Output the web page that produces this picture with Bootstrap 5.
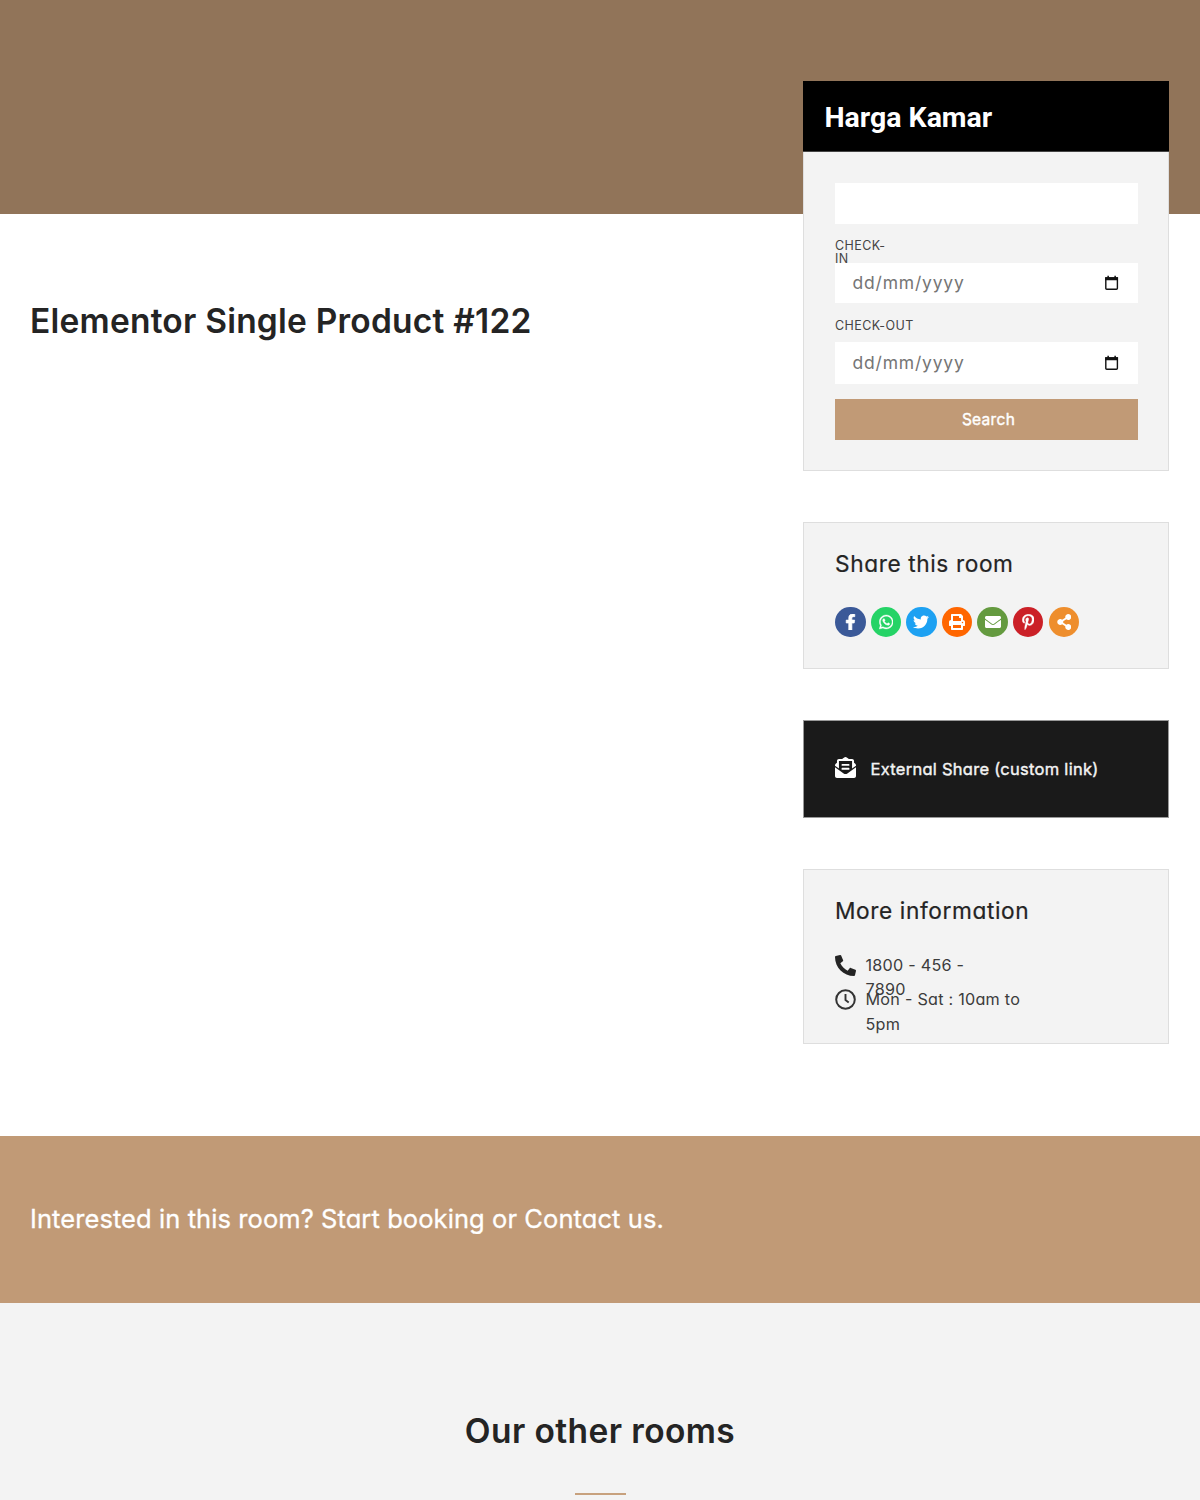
<!DOCTYPE html>
<html lang="en">
<head>
<meta charset="utf-8">
<meta name="viewport" content="width=device-width, initial-scale=1">
<title>Elementor Single Product #122</title>
<link href="https://cdn.jsdelivr.net/npm/bootstrap@5.3.0/dist/css/bootstrap.min.css" rel="stylesheet">
<style>
body{font-family:Inter,"Open Sans",sans-serif;font-feature-settings:"cv11","ss03";color:#242424;height:1500px;overflow:hidden;background:#fff}
.hero{height:213.5px;background:#917459}
.room{height:922.5px;padding:0 31px 0 30px}
.room-title{font-size:33.5px;font-weight:600;line-height:40px;margin-top:87px;letter-spacing:.22px}
.side{width:366px;margin-top:-132.5px;gap:51px}
.panel{background:#f3f3f3;border:1px solid #dedede;padding:0 30px 0 31px}
.panel-head{background:#000;color:#fff;margin:-1px -31px 0 -32px;height:71px;padding:0 21.5px;font-family:Roboto,sans-serif;font-weight:700;font-size:28.5px;letter-spacing:-.02px;line-height:74px;border-bottom:1px solid #444}
.booking{height:390px}.share{height:147px}.external{height:98px;background:#1a1a1a;border-color:#999;color:#f3f3f3}.info{height:175px}
.field{background:#fff;height:41px;padding:0 19px 0 17.5px;color:#757575;font-size:17.5px;letter-spacing:.8px}
.field-first{margin-top:31px}
.field-in{height:40px}
.field-label{font-size:12.5px;line-height:13px;color:#444;letter-spacing:.45px}
.label-in{width:56px;height:39px;padding-top:15px}
.label-out{height:39px;padding-top:16px}
.field-out{height:42px}
.search{height:41px;background:#c19a76;color:#fff;font-size:15.5px;font-weight:400;-webkit-text-stroke:.4px #fff;margin-top:15px;letter-spacing:.3px}
.panel-title{font-size:22.7px;line-height:30px;font-weight:400;letter-spacing:.6px;padding-top:26px;-webkit-text-stroke:.2px currentColor}
.share-row{margin-top:27.5px;gap:5.1px}
.dot{width:30.5px;height:30.5px;border-radius:50%}
.dot svg{fill:#fff;display:block}
.ext-text{margin-left:14.5px;font-size:16.5px;letter-spacing:.27px;-webkit-text-stroke:.4px currentColor}
.info-row{height:34.7px;font-size:16.2px;line-height:24.5px;color:#3c3c3c;letter-spacing:.24px}
.info-row svg{margin-top:2px}
.info-row span{margin-left:9.5px}
.info-first{margin-top:26.5px}
.cta{height:166.5px;background:#c19a76;color:#fff;padding:0 30px;font-size:25.5px;letter-spacing:.08px;-webkit-text-stroke:.3px #fff}
.others{height:198px;background:#f3f3f3}
.others h2{font-size:33.5px;font-weight:600;line-height:40px;padding-top:108px;letter-spacing:.4px}
.rule{width:51px;height:2px;background:#c7a17d;margin-top:42px}
</style>
<script src="https://cdn.jsdelivr.net/npm/bootstrap@5.3.0/dist/js/bootstrap.bundle.min.js"></script>
</head>
<body>
<header class="hero"></header>
<main class="room d-flex justify-content-between align-items-start">
  <h1 class="room-title mb-0">Elementor Single Product #122</h1>
  <aside class="side d-flex flex-column">
    <section class="panel booking">
      <div class="panel-head">Harga Kamar</div>
      <div class="field field-first"></div>
      <div class="field-label label-in">CHECK-<br>IN</div>
      <div class="field field-in d-flex align-items-center justify-content-between"><span>dd/mm/yyyy</span>
        <svg width="15" height="16" viewBox="0 0 15 16" fill="none"><path d="M1.8 3h11.6v10.2q0 1-1 1H2.8q-1 0-1-1z" stroke="#111" stroke-width="1.4"/><path d="M1.2 2.2h12.8v3H1.2zM3.4.8h1.5v2H3.4zm7 0h1.5v2h-1.5z" fill="#111"/></svg>
      </div>
      <div class="field-label label-out">CHECK-OUT</div>
      <div class="field field-out d-flex align-items-center justify-content-between"><span>dd/mm/yyyy</span>
        <svg width="15" height="16" viewBox="0 0 15 16" fill="none"><path d="M1.8 3h11.6v10.2q0 1-1 1H2.8q-1 0-1-1z" stroke="#111" stroke-width="1.4"/><path d="M1.2 2.2h12.8v3H1.2zM3.4.8h1.5v2H3.4zm7 0h1.5v2h-1.5z" fill="#111"/></svg>
      </div>
      <button class="search btn rounded-0 border-0 w-100 p-0 ps-1 d-block" type="button">Search</button>
    </section>
    <section class="panel share">
      <h2 class="panel-title mb-0">Share this room</h2>
      <div class="share-row d-flex">
        <span class="dot d-flex align-items-center justify-content-center" style="background:#3b5998"><svg width="11" height="16" viewBox="0 0 320 512" stroke="#fff" stroke-width="22"><path d="M279 288l14-93h-89v-60c0-25 12-50 52-50h41V7s-37-7-72-7C152 0 104 44 104 125v70H22v93h82v224h100V288z"/></svg></span>
        <span class="dot d-flex align-items-center justify-content-center" style="background:#25d366"><svg width="14.5" height="16" viewBox="0 0 448 512" stroke="#fff" stroke-width="12"><path d="M381 97C339 55 283 32 224 32 102 32 2 131 2 254c0 39 10 77 30 111L0 480l118-31c32 18 69 27 106 27 122 0 224-99 224-222 0-59-25-115-67-157zM224 439c-33 0-66-9-94-26l-7-4-70 18 19-68-5-7c-18-29-28-63-28-98C39 152 122 69 224 69c49 0 96 19 130 54 35 35 57 82 57 131 0 102-85 185-187 185zm101-139c-5-3-33-16-38-18-5-2-9-3-13 3-4 5-14 18-17 21-3 4-7 4-12 1-33-16-54-29-76-66-6-10 6-9 16-31 2-4 1-7 0-9-1-3-12-31-17-42-5-11-9-9-13-9h-11c-4 0-10 1-15 7s-19 19-19 46c0 28 20 54 22 58 3 4 39 60 95 84 35 15 49 16 67 14 10-2 32-13 37-26 4-13 4-24 3-26-1-3-5-4-9-7z"/></svg></span>
        <span class="dot d-flex align-items-center justify-content-center" style="background:#1da1f2"><svg width="16" height="16" viewBox="0 0 512 512"><path d="M459 152c0 4 0 9 0 14 0 138-105 298-298 298-59 0-114-17-161-47 8 1 16 1 25 1 49 0 94-16 130-45-46-1-84-31-98-73 16 3 31 2 47-2-48-10-84-52-84-103v-1c14 8 30 13 47 13-46-31-61-91-32-140 52 64 129 105 216 110-17-78 42-129 102-129 30 0 57 13 76 33 24-5 46-13 67-25-8 24-25 45-46 58 21-2 42-8 60-16-14 21-31 39-51 54z"/></svg></span>
        <span class="dot d-flex align-items-center justify-content-center" style="background:#ff6600"><svg width="16" height="16" viewBox="0 0 512 512"><path fill-rule="evenodd" d="M448 192V77c0-8-3-17-9-23l-45-45c-6-6-15-9-23-9H96C78 0 64 14 64 32v160c-35 0-64 29-64 64v112c0 9 7 16 16 16h48v96c0 18 14 32 32 32h320c18 0 32-14 32-32v-96h48c9 0 16-7 16-16V256c0-35-29-64-64-64zm-64 256H128v-96h256zm0-224H128V64h192v48c0 9 7 16 16 16h48zm48 72a24 24 0 1 1 0-48 24 24 0 0 1 0 48z"/></svg></span>
        <span class="dot d-flex align-items-center justify-content-center" style="background:#649a3f"><svg width="16" height="16" viewBox="0 0 512 512"><path d="M502 191c4-3 10 0 10 5v204c0 27-21 48-48 48H48c-27 0-48-21-48-48V196c0-5 6-8 10-5 22 17 52 40 155 114 21 16 57 48 91 48s70-32 91-48c103-74 133-97 155-114zM256 320c23 0 57-29 74-42 133-97 143-105 173-128 6-5 9-12 9-19v-19c0-27-21-48-48-48H48c-27 0-48 21-48 48v19c0 7 3 14 9 19 30 23 40 31 173 128 17 13 51 42 74 42z"/></svg></span>
        <span class="dot d-flex align-items-center justify-content-center" style="background:#cb2027"><svg width="12.5" height="16" viewBox="0 0 384 512" stroke="#fff" stroke-width="12"><path d="M204 6C101 6 0 75 0 186c0 70 40 110 64 110 10 0 16-28 16-35 0-9-24-29-24-68 0-81 62-138 141-138 69 0 119 39 119 111 0 53-21 153-91 153-25 0-46-18-46-44 0-38 26-75 26-114 0-66-94-54-94 26 0 17 2 35 10 50-14 59-42 148-42 209 0 19 3 37 4 56 3 4 2 4 7 2 51-70 49-83 72-174 12 24 44 36 69 36 106 0 153-103 153-196C384 71 299 6 204 6z"/></svg></span>
        <span class="dot d-flex align-items-center justify-content-center" style="background:#ee8e2d"><svg width="14.5" height="16" viewBox="0 0 448 512"><path d="M352 320c-23 0-44 8-60 21l-102-64c3-14 3-28 0-42l102-64c16 13 37 21 60 21 53 0 96-43 96-96S405 0 352 0s-96 43-96 96c0 7 1 14 2 21l-102 64c-16-13-37-21-60-21-53 0-96 43-96 96s43 96 96 96c23 0 44-8 60-21l102 64c-1 7-2 14-2 21 0 53 43 96 96 96s96-43 96-96-43-96-96-96z"/></svg></span>
      </div>
    </section>
    <section class="panel external d-flex align-items-center">
      <svg width="21" height="21" class="mb-1" viewBox="0 0 512 512" fill="#fff"><path fill-rule="evenodd" d="M176 216h160c9 0 16-7 16-16v-16c0-9-7-16-16-16H176c-9 0-16 7-16 16v16c0 9 7 16 16 16zm-16 80c0 9 7 16 16 16h160c9 0 16-7 16-16v-16c0-9-7-16-16-16H176c-9 0-16 7-16 16zm96 121c-16 0-32-5-45-15L0 250v214c0 27 21 48 48 48h416c27 0 48-21 48-48V250L301 402c-13 10-29 15-45 15zm238-254c-9-7-17-13-30-23V96c0-27-21-48-48-48h-77c-3-2-6-4-9-7C313 29 280 0 256 0s-57 29-74 41c-3 3-6 5-9 7H96c-27 0-48 21-48 48v44c-13 10-21 16-30 23A48 48 0 0 0 0 201v10l96 69V96h320v184l96-69v-10c0-15-7-29-18-38z"/></svg>
      <span class="ext-text">External Share (custom link)</span>
    </section>
    <section class="panel info">
      <h2 class="panel-title mb-0">More information</h2>
      <div class="info-row info-first d-flex align-items-start">
        <svg width="21" height="21" class="flex-shrink-0" viewBox="0 0 512 512" fill="#242424"><path d="M493 25L389 1c-11-3-23 3-27 14l-48 112c-4 10-1 21 7 28l61 49c-36 77-99 141-178 178l-49-61c-7-8-18-11-28-7L15 362c-11 4-17 16-14 27l24 104c2 11 12 19 23 19 256 0 464-207 464-464 0-11-8-21-19-23z" transform="matrix(-1 0 0 1 512 0)"/></svg>
        <span>1800 - 456 -<br>7890</span>
      </div>
      <div class="info-row d-flex align-items-start">
        <svg width="21" height="21" class="flex-shrink-0" viewBox="0 0 21 21" fill="none" stroke="#333"><circle cx="10.5" cy="10.5" r="9.3" stroke-width="2"/><path d="M10.5 5v6l3.2 2.4" stroke-width="1.9"/></svg>
        <span>Mon - Sat : 10am to<br>5pm</span>
      </div>
    </section>
  </aside>
</main>
<section class="cta d-flex align-items-center"><span>Interested in this room? Start booking or Contact us.</span></section>
<section class="others d-flex flex-column align-items-center"><h2 class="mb-0">Our other rooms</h2><div class="rule"></div></section>
</body>
</html>
